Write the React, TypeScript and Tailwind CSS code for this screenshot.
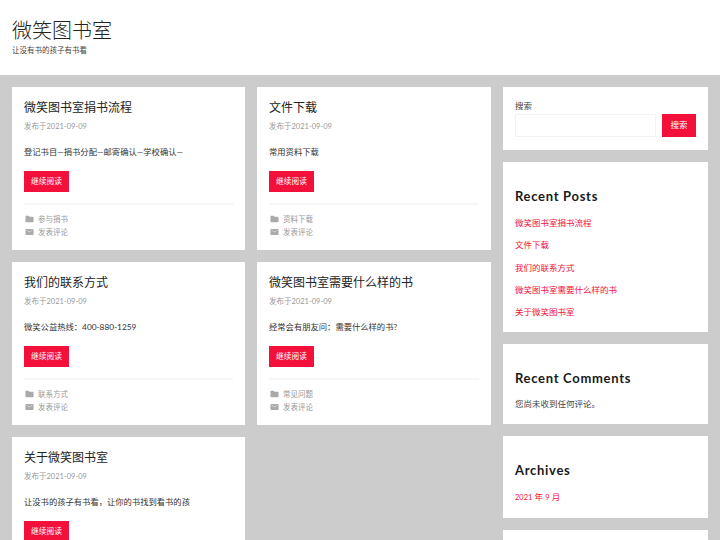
const sans = "font-['Lato','Noto_Sans_CJK_SC',sans-serif]";

function Folder() {
  return (
    <svg viewBox="0 0 20 20" className="w-[9px] h-[9px] ml-[0.5px] mr-[0.5px] fill-[#aaaaaa] shrink-0">
      <path d="M1 4.5 C1 3.7 1.6 3 2.5 3 H8 L10 5 H17.5 C18.4 5 19 5.7 19 6.5 V15.5 C19 16.4 18.4 17 17.5 17 H2.5 C1.6 17 1 16.4 1 15.5 Z" />
    </svg>
  );
}

function Mail() {
  return (
    <svg viewBox="0 0 20 20" className="w-[9px] h-[9px] ml-[0.5px] mr-[0.5px] fill-[#aaaaaa] shrink-0">
      <path d="M2.5 3.5 H17.5 C18.4 3.5 19 4.1 19 5 V15 C19 15.9 18.4 16.5 17.5 16.5 H2.5 C1.6 16.5 1 15.9 1 15 V5 C1 4.1 1.6 3.5 2.5 3.5 Z M3 6.3 L10 10.6 L17 6.3 V5.4 L10 9.4 L3 5.4 Z" fillRule="evenodd" />
    </svg>
  );
}

type PostProps = { title: string; excerpt: string; cat?: string };

function Post({ title, excerpt, cat }: PostProps) {
  return (
    <article className="bg-white px-3 pt-[11px] h-[163.2px]">
      <h2 className="text-[12px] leading-[20px] font-normal text-[#222222]">{title}</h2>
      <div className="mt-[3px] text-[7.5px] leading-[12px] text-[#999999]">发布于2021-09-09</div>
      <p className="mt-[13px] text-[8.3px] leading-[13px] text-[#333333]">{excerpt}</p>
      <button className="mt-[12px] block w-[45px] h-[21px] bg-[#f3103a] text-white text-[7.7px] leading-[21px] text-center">继续阅读</button>
      {cat && (
        <div className="mt-[12px] border-t border-[#eeeeee] pt-[8px] -translate-y-[0.5px]">
          <div className="flex items-center gap-[4px] h-[13px] text-[7.5px] text-[#999999]">
            <Folder />
            <span>{cat}</span>
          </div>
          <div className="flex items-center gap-[4px] h-[13px] text-[7.5px] text-[#999999]">
            <Mail />
            <span>发表评论</span>
          </div>
        </div>
      )}
    </article>
  );
}

function WidgetTitle({ children }: { children: string }) {
  return <h2 className="text-[13px] leading-[16px] font-bold text-[#1a1a1a] tracking-[0.7px]">{children}</h2>;
}

export default function App() {
  return (
    <div className={`h-[540px] overflow-hidden bg-[#cccccc] ${sans}`}>
      <header className="h-[75px] bg-white px-3 pt-[17px]">
        <h1 className="text-[20px] leading-[27px] font-light text-[#222222]">微笑图书室</h1>
        <p className="mt-[1px] text-[7.5px] leading-[12px] text-[#444444]">让没有书的孩子有书看</p>
      </header>
      <div className="flex gap-3 p-3">
        <main className="grid grid-cols-[233px_234px] gap-3 content-start">
          <Post title="微笑图书室捐书流程" excerpt="登记书目—捐书分配—邮寄确认—学校确认—" cat="参与捐书" />
          <Post title="文件下载" excerpt="常用资料下载" cat="资料下载" />
          <Post title="我们的联系方式" excerpt="微笑公益热线：400-880-1259" cat="联系方式" />
          <Post title="微笑图书室需要什么样的书" excerpt="经常会有朋友问：需要什么样的书?" cat="常见问题" />
          <Post title="关于微笑图书室" excerpt="让没书的孩子有书看，让你的书找到看书的孩" />
        </main>
        <aside className="flex flex-col gap-3 w-[205px]">
          <section className="bg-white h-[63px] px-3 pt-[13px]">
            <div className="text-[8.5px] leading-[12px] text-[#444444]">搜索</div>
            <div className="flex gap-[6px] mt-[2px]">
              <div className="w-[141px] h-[23px] border border-[#f3f3f3]" />
              <button className="w-[34px] h-[23px] bg-[#f3103a] text-white text-[8.5px]">搜索</button>
            </div>
          </section>
          <section className="bg-white h-[170px] px-3 pt-[26px]">
            <WidgetTitle>Recent Posts</WidgetTitle>
            <ul className="mt-[13px] flex flex-col gap-[10px] text-[8.5px] leading-[12.3px] text-[#f3103a]">
              <li>微笑图书室捐书流程</li>
              <li>文件下载</li>
              <li>我们的联系方式</li>
              <li>微笑图书室需要什么样的书</li>
              <li>关于微笑图书室</li>
            </ul>
          </section>
          <section className="bg-white h-[80px] px-3 pt-[26px]">
            <WidgetTitle>Recent Comments</WidgetTitle>
            <p className="mt-[12px] text-[8.5px] leading-[12px] text-[#444444]">您尚未收到任何评论。</p>
          </section>
          <section className="bg-white h-[82px] px-3 pt-[26px]">
            <WidgetTitle>Archives</WidgetTitle>
            <p className="mt-[13px] text-[8.5px] leading-[12px] text-[#f3103a]"><span className="text-[7.5px]">2021</span> 年 <span className="text-[7.5px]">9</span> 月</p>
          </section>
          <section className="bg-white h-[60px]" />
        </aside>
      </div>
    </div>
  );
}
